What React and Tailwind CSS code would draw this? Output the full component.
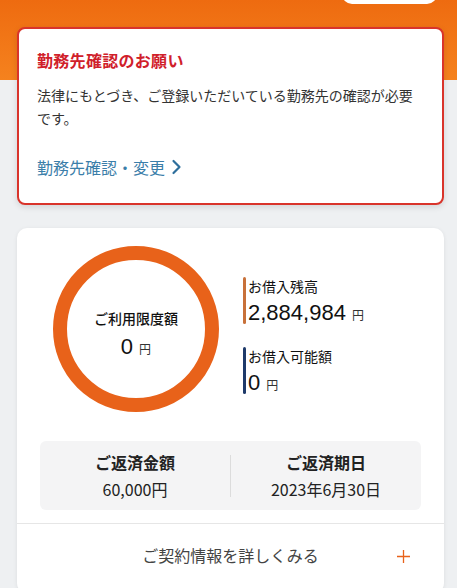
import React from 'react';

const jp = { fontFamily: '"Noto Sans CJK JP", "Noto Sans", sans-serif' };

const Amount = ({ value, big = 'text-[22px]' }) => (
  <div className="flex items-baseline leading-none">
    <span className={`${big} font-medium text-[#111] font-['Liberation_Sans',sans-serif]`}>{value}</span>
    <span className="ml-[6px] text-[12px] text-[#333]">円</span>
  </div>
);

const Balance = ({ label, value, bar }) => (
  <div className="flex items-stretch">
    <div className={`w-[3px] rounded-full ${bar}`} />
    <div className="pl-[2px] flex flex-col gap-[7px]">
      <div className="text-[14px] leading-[18px] text-[#111]">{label}</div>
      <Amount value={value} />
    </div>
  </div>
);

export default function App() {
  return (
    <div
      style={jp}
      className="w-[457px] h-[588px] overflow-hidden bg-[linear-gradient(to_bottom,#ee6b10_0px,#f5821e_80px,#eef0f2_80px)]"
    >
      {/* top pill (cut off) */}
      <div className="flex justify-end pr-[20px]">
        <div className="w-[95px] h-[20px] -mt-[16px] rounded-full bg-white" />
      </div>

      {/* alert card */}
      <div className="ml-[17px] mr-[13px] mt-[23px] bg-white border-2 border-[#d9342b] rounded-[8px] pl-[18px] pr-[16px] pt-[18px] pb-[24px] shadow-[0_2px_6px_rgba(0,0,0,0.12)]">
        <div className="text-[16px] leading-[26px] font-bold text-[#d0202a] tracking-[0.3px]">勤務先確認のお願い</div>
        <p className="mt-[11px] text-[14px] leading-[23px] text-[#333]">
          法律にもとづき、ご登録いただいている勤務先の確認が必要です。
        </p>
        <div className="mt-[25px] flex items-center text-[16px] leading-[24px] text-[#3b7ea9]">
          <span>勤務先確認・変更</span>
          <svg className="ml-[6px]" width="11" height="16" viewBox="0 0 11 16" fill="none">
            <path d="M2.5 2l6 6-6 6" stroke="#2e6f9c" strokeWidth="2.2" strokeLinecap="round" strokeLinejoin="round" />
          </svg>
        </div>
      </div>

      {/* summary card */}
      <div className="ml-[17px] mr-[13px] mt-[23px] bg-white rounded-[10px] shadow-[0_1px_4px_rgba(0,0,0,0.08)]">
        <div className="flex items-center pt-[18px] pl-[36px]">
          <div className="w-[166px] h-[166px] rounded-full border-[14px] border-[#e8621a] flex flex-col items-center justify-center">
            <div className="text-[14px] leading-[18px] font-medium text-[#111] mt-[8px]">ご利用限度額</div>
            <div className="mt-[9px]">
              <Amount value="0" />
            </div>
          </div>
          <div className="ml-[24px] flex flex-col gap-[23px] mt-[12px]">
            <Balance label="お借入残高" value="2,884,984" bar="bg-[#c8713a]" />
            <Balance label="お借入可能額" value="0" bar="bg-[#1e3a6a]" />
          </div>
        </div>

        <div className="mx-[23px] mt-[29px] h-[69px] bg-[#f4f4f5] rounded-[6px] flex items-center">
          <div className="flex-1 flex flex-col items-center">
            <div className="text-[16px] leading-[22px] font-bold text-[#222]">ご返済金額</div>
            <div className="mt-[5px] text-[16px] leading-[22px] text-[#222]">60,000円</div>
          </div>
          <div className="w-px h-[42px] bg-[#dcdcdc]" />
          <div className="flex-1 flex flex-col items-center">
            <div className="text-[16px] leading-[22px] font-bold text-[#222]">ご返済期日</div>
            <div className="mt-[5px] text-[16px] leading-[22px] text-[#222]">2023年6月30日</div>
          </div>
        </div>

        <div className="mt-[13px] border-t border-[#e6e6e6] h-[70px] flex items-center justify-center relative">
          <span className="text-[16px] text-[#444] -mt-[8px]">ご契約情報を詳しくみる</span>
          <svg className="absolute right-[33px] top-[25px]" width="15" height="15" viewBox="0 0 15 15">
            <path d="M7.5 1v13M1 7.5h13" stroke="#e8621a" strokeWidth="1.3" />
          </svg>
        </div>
      </div>
    </div>
  );
}
